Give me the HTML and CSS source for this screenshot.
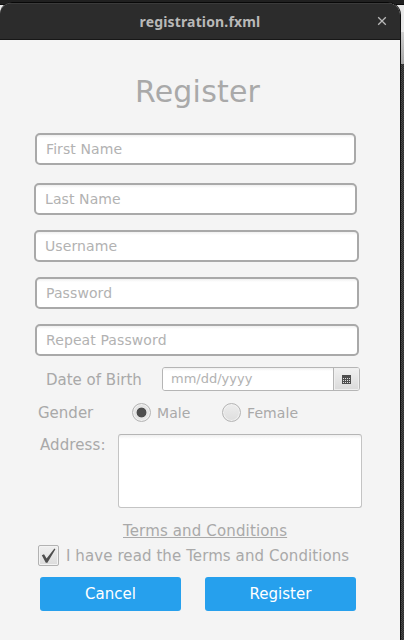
FILE: index.html
```html
<!DOCTYPE html>
<html lang="en">
<head>
<meta charset="utf-8">
<title>registration.fxml</title>
<link rel="stylesheet" href="styles.css">
</head>
<body>
<div class="window">
  <header class="titlebar">
    <span class="window-title">registration.fxml</span>
    <svg class="close" width="10" height="10" viewBox="0 0 10 10"><path d="M1.2 1.2 8.8 8.8M8.8 1.2 1.2 8.8" fill="none" stroke="#b9b9b9" stroke-width="1.3"/></svg>
  </header>
  <form class="form">
    <h1>Register</h1>
    <input class="field first" type="text" placeholder="First Name">
    <input class="field last" type="text" placeholder="Last Name">
    <input class="field user" type="text" placeholder="Username">
    <input class="field pass" type="password" placeholder="Password">
    <input class="field pass" type="password" placeholder="Repeat Password">
    <div class="row birth">
      <label>Date of Birth</label>
      <div class="datepicker">
        <input type="text" placeholder="mm/dd/yyyy">
        <button type="button">
          <svg width="9" height="9" viewBox="0 0 9 9" shape-rendering="crispEdges"><path d="M0 0h9v9H0z" fill="#4d4d4d"/><path d="M1 3.5h7M1 5.5h7M1 7.5h7" stroke="#dedede" stroke-dasharray="1 1"/></svg>
        </button>
      </div>
    </div>
    <div class="row gender">
      <span class="gender-label">Gender</span>
      <label class="option male"><i class="radio checked"></i>Male</label>
      <label class="option"><i class="radio"></i>Female</label>
    </div>
    <div class="row address">
      <label>Address:</label>
      <textarea></textarea>
    </div>
    <a class="terms">Terms and Conditions</a>
    <label class="row agree">
      <span class="checkbox"><svg width="15" height="16" viewBox="0 0 15 16"><path d="M.8 7.2 3 6.2 5.6 10.6 13.4.4 14.4 1.2 6.4 14.8H4.8Z" fill="#4d4d4d"/></svg></span>
      <span>I have read the Terms and Conditions</span>
    </label>
    <div class="row actions">
      <button class="cancel" type="button">Cancel</button>
      <button class="submit" type="button">Register</button>
    </div>
  </form>
</div>
<div class="backdrop"></div>
</body>
</html>
```
FILE: styles.css
```css
* { box-sizing: border-box; }
body {
  margin: 0;
  height: 640px;
  padding-top: 2px;
  display: flex;
  overflow: hidden;
  background: linear-gradient(#202020 0 4px, #0b0b0b 4px 5px, #e8e8e8 5px);
  font: 15px/18px "DejaVu Sans", sans-serif;
  color: #a9a9a9;
}
.window {
  width: 401px;
  height: 638px;
  flex: none;
  border-top: 1px solid #080808;
  border-right: 1px solid #101010;
  border-radius: 12px 13px 0 0;
  background: #f4f4f4;
  overflow: hidden;
}
.backdrop {
  flex: 1;
  margin-top: 3px;
  background:
    linear-gradient(#e8e8e8 0 27px, #d0d0d0 27px, #a6a6a6 59px, transparent 59px),
    repeating-conic-gradient(#2c2c2c 0 25%, #474747 0 50%) 0 0 / 2px 2px;
}
.titlebar {
  height: 37px;
  display: flex;
  align-items: center;
  justify-content: center;
  position: relative;
  background: #2c2c2c;
  border-top: 1px solid #3b3b3b;
  border-bottom: 1px solid #171717;
}
.window-title {
  font: bold 14px/18px "Noto Sans", sans-serif;
  letter-spacing: 0.15px;
  color: #b9b9b9;
}
.close { position: absolute; right: 13px; top: 12px; }
.form { display: flex; flex-direction: column; align-items: flex-start; }
h1 {
  margin: 34px 0 0 135px;
  font-size: 30px;
  font-weight: normal;
  line-height: 36px;
  letter-spacing: 0.2px;
}
input, textarea, button { font: inherit; outline: none; }
::placeholder { color: #b2b2b2; opacity: 1; }
.field {
  height: 32px;
  margin: 15px 0 0 34px;
  padding: 0 9px;
  border: 2px solid #a9a9a9;
  border-radius: 5px;
  background: linear-gradient(#f0f0f0, #fff 3px);
  font-size: 14px;
  letter-spacing: 0.1px;
}
.first { width: 321px; margin: 23px 0 0 35px; }
.last { width: 323px; margin-top: 18px; }
.user { width: 325px; }
.pass { width: 324px; margin-left: 35px; }
.row { display: flex; }
.birth { margin: 11px 0 0 46px; height: 24px; }
.birth > label { width: 116px; padding-top: 4px; }
.datepicker {
  width: 198px;
  display: flex;
  border: 1px solid #b5b5b5;
  border-radius: 3px;
  overflow: hidden;
}
.datepicker input {
  width: 170px;
  padding: 0 8px;
  border: 0;
  background: linear-gradient(#f0f0f0, #fff 3px);
  font-size: 13px;
}
.datepicker button {
  flex: 1;
  display: flex;
  align-items: center;
  justify-content: center;
  padding: 0;
  border: 0;
  border-left: 1px solid #b5b5b5;
  background: linear-gradient(#f1f1f1, #dadada);
  box-shadow: inset 0 0 0 1px #efefef;
}
.gender { margin: 12px 0 0 38px; height: 19px; }
.gender-label { width: 94px; padding-top: 1px; }
.option { display: flex; align-items: center; gap: 6px; font-size: 14px; letter-spacing: 0.1px; }
.male { width: 90px; }
.radio {
  width: 19px;
  height: 19px;
  border: 1px solid #b5b5b5;
  border-radius: 50%;
  background: linear-gradient(#ededed, #dedede);
  box-shadow: inset 0 0 0 1px #f1f1f1;
}
.radio.checked { background: radial-gradient(circle, #4d4d4d 4.5px, #e4e4e4 5.3px); }
.address { margin: 12px 0 0 40px; height: 74px; }
.address label { width: 78px; padding-top: 2px; letter-spacing: 0.1px; }
textarea {
  width: 244px;
  height: 74px;
  border: 1px solid #c4c4c4;
  border-top-color: #b5b5b5;
  border-radius: 3px;
  background: linear-gradient(#f0f0f0, #fff 4px);
  resize: none;
}
.terms {
  margin: 14px 0 0 123px;
  letter-spacing: 0.14px;
  text-decoration: underline;
  text-decoration-thickness: 1px;
}
.agree { margin: 5px 0 0 38px; align-items: center; gap: 7px; height: 21px; letter-spacing: 0.09px; }
.checkbox {
  width: 21px;
  height: 21px;
  display: flex;
  align-items: center;
  justify-content: center;
  border: 1px solid #b2b2b2;
  border-radius: 2px;
  background: linear-gradient(#efefef, #dcdcdc);
  box-shadow: inset 0 0 0 1px #f3f3f3;
}
.actions { margin: 11px 0 0 40px; gap: 24px; }
.actions button {
  height: 34px;
  padding: 0;
  border: 0;
  border-radius: 3px;
  background: #26a0ed;
  color: #fff;
}
.cancel { width: 141px; }
.submit { width: 151px; }
```
